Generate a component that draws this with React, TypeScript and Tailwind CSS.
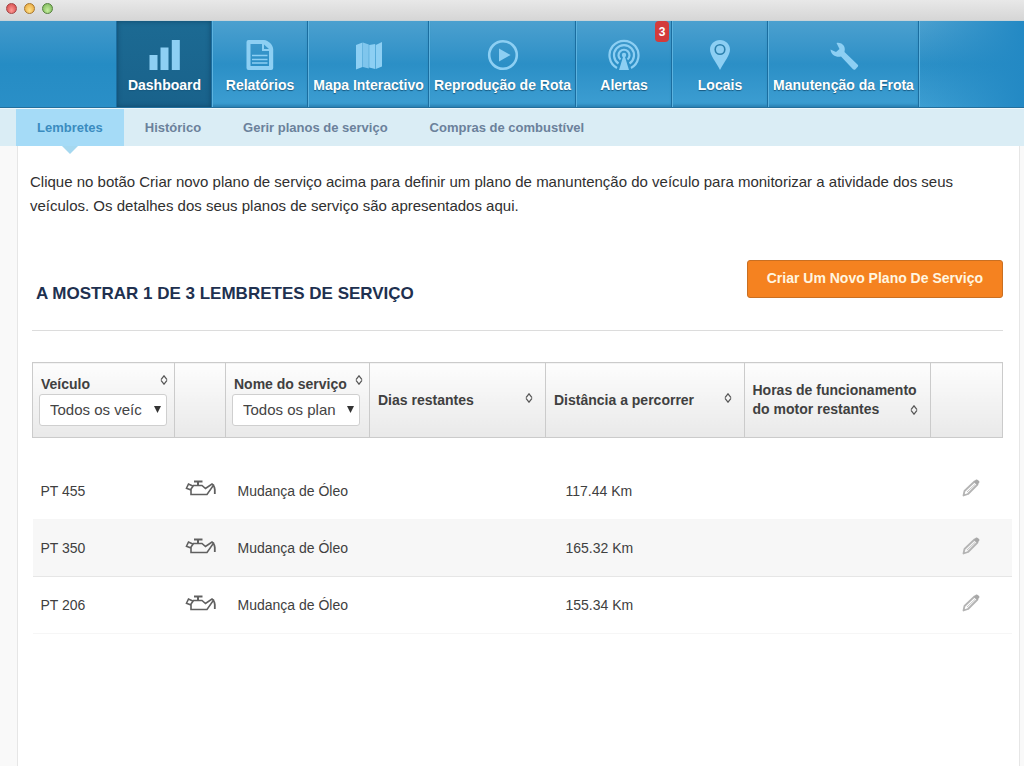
import React from "react";

type NavItem = { label: string; width: string; icon: React.ReactNode; badge?: number; active?: boolean };

const BarsIcon = () => (
  <svg width="32" height="32" viewBox="0 0 32 32" fill="currentColor" aria-hidden="true">
    <path d="M0.5 16H8.500V31H0.5zM11.500 8.500H19.500V31h-8zM22.800 1h8v30h-8z" />
  </svg>
);

const ReportIcon = () => (
  <svg width="32" height="32" viewBox="0 0 32 32" aria-hidden="true">
    <path
      fill="currentColor"
      fillRule="evenodd"
      d="M4.500 1H20c4.500.5 8.800 4.500 9.200 9V29a2 2 0 0 1-2 2H4.500a2 2 0 0 1-2-2V3a2 2 0 0 1 2-2zM6.500 5v22h18.500V12h-7V5zM20 5.500V10h5z"
    />
    <path stroke="currentColor" strokeWidth="1.500" d="M8 16.500h15.500M8 20.500h15.500M8 24h15.500" />
  </svg>
);

const MapIcon = () => (
  <svg width="32" height="32" viewBox="0 0 32 32" fill="currentColor" aria-hidden="true">
    <path d="M3 6l6.500-2.500V28L3 30.500zM16.200 6l6-1V30l-6-1.500zM22.800 6l6.200-3v24.500L22.800 30z" />
    <path d="M9.900 3.500L15.800 5.500V29.500L9.900 28z" opacity=".85" />
  </svg>
);

const PlayIcon = () => (
  <svg width="32" height="32" viewBox="0 0 32 32" aria-hidden="true">
    <circle cx="16" cy="16" r="13.800" fill="none" stroke="currentColor" strokeWidth="2.600" />
    <path fill="currentColor" d="M12 9.500l11.500 6.500L12 22.500z" />
  </svg>
);

const AlertIcon = () => (
  <svg width="32" height="32" viewBox="0 0 32 32" fill="none" stroke="currentColor" strokeWidth="2.200" aria-hidden="true">
    <path d="M9 29A14.500 14.500 0 1 1 23 29" />
    <path d="M10.500 24.500A10 10 0 1 1 21.500 24.500" />
    <path d="M12.500 20.500A5.500 5.500 0 1 1 19.500 20.500" />
    <circle cx="16" cy="16" r="2.200" fill="currentColor" stroke="none" />
    <path d="M15 18h2l4 13H11z" fill="currentColor" stroke="none" />
  </svg>
);

const PinIcon = () => (
  <svg width="32" height="32" viewBox="0 0 32 32" aria-hidden="true">
    <path fill="currentColor" d="M16 1c5.700 0 10 4.300 10 9.500C26 16.500 20 23 16 31 12 23 6 16.500 6 10.500 6 5.300 10.300 1 16 1z" />
    <circle cx="16" cy="10.500" r="4.800" fill="none" stroke="#2b80ad" strokeWidth="1.600" />
  </svg>
);

const WrenchIcon = () => (
  <svg width="32" height="32" viewBox="0 0 32 32" fill="currentColor" aria-hidden="true">
    <path d="M8.500 4c4-1 8.500 2 8.300 6.500l-.3 2.500L29.500 25.500c1 1 .8 1.800 0 2.500l-2 2.200c-.9.900-1.800.800-2.700-.1L13 17.500c-4.500 1.200-10-1.300-10.500-7l5.500 2.500 3.500-3z" />
  </svg>
);

const OilIcon = () => (
  <svg width="32" height="18" viewBox="0 0 32 18" fill="none" stroke="#606060" strokeWidth="1.600" aria-hidden="true">
    <path d="M9 2.500h8.500" strokeWidth="2" />
    <path d="M13 2.500v4" strokeWidth="2" />
    <path d="M6 15.500V10L8.500 6.500H17l3.500 3L27 5l1.500 1.200L22 15.500z" />
    <path d="M7.800 7L3.500 5 1.500 9.200 6 11" />
    <path d="M28 6c1.200 1.500 1.800 3 1.800 4.500V15" strokeWidth="1.800" />
  </svg>
);

const PencilIcon = () => (
  <svg width="18" height="18" viewBox="0 0 18 18" aria-hidden="true">
    <path fill="none" stroke="#b4b4b4" strokeWidth="1.800" strokeLinejoin="round" d="M1.500 16.500l1-4.500L12.500 2.500l3 3L6 15z" />
    <path d="M5 13l8-7.500" stroke="#c4c4c4" strokeWidth="1" />
    <path fill="#a8a8a8" d="M12 2.500L13.800 .8c.7-.6 1.400-.5 2 .1l1.200 1.200c.6.600.6 1.300 0 1.900L15.300 6z" />
  </svg>
);

const SortIcon = () => (
  <svg className="block" width="8" height="10" viewBox="0 0 8 10" fill="none" stroke="#555" strokeWidth="1.200" aria-hidden="true">
    <path d="M1 4.700L4 .8l3 3.900M1 5.300l3 3.900 3-3.900" />
  </svg>
);

const navItems: NavItem[] = [
  { label: "Dashboard", width: "w-[95px]", icon: <BarsIcon />, active: true },
  { label: "Relatórios", width: "w-[96px]", icon: <ReportIcon /> },
  { label: "Mapa Interactivo", width: "w-[121px]", icon: <MapIcon /> },
  { label: "Reprodução de Rota", width: "w-[147px]", icon: <PlayIcon /> },
  { label: "Alertas", width: "w-[96px]", icon: <AlertIcon />, badge: 3 },
  { label: "Locais", width: "w-[96px]", icon: <PinIcon /> },
  { label: "Manutenção da Frota", width: "w-[151px]", icon: <WrenchIcon /> },
];

const subItems = ["Lembretes", "Histórico", "Gerir planos de serviço", "Compras de combustível"];

const reminders = [
  { vehicle: "PT 455", service: "Mudança de Óleo", distance: "117.44 Km" },
  { vehicle: "PT 350", service: "Mudança de Óleo", distance: "165.32 Km" },
  { vehicle: "PT 206", service: "Mudança de Óleo", distance: "155.34 Km" },
];

const headCell = "border border-[#cbcbcb] bg-linear-to-b from-[#fdfdfd] to-[#e9e9e9] px-2 text-left font-bold";

function SortButton({ label }: { label: string }) {
  return (
    <button type="button" aria-label={`Ordenar por ${label}`} className="shrink-0 pb-1">
      <SortIcon />
    </button>
  );
}

function FilterHead({ id, label, option }: { id: string; label: string; option: string }) {
  return (
    <div className="-mx-0.5 pb-1">
      <div className="flex items-center justify-between pl-0.5">
        <label htmlFor={id} className="pt-1 leading-5 whitespace-nowrap">
          {label}
        </label>
        <SortButton label={label} />
      </div>
      <div className="relative w-32">
        <select
          id={id}
          className="block h-8 w-full appearance-none rounded-[3px] border border-[#cfcfcf] bg-white pl-2.5 text-[15px] font-normal text-[#444]"
        >
          <option>{option}</option>
        </select>
        <svg className="pointer-events-none absolute top-3 right-1.5" width="7" height="7" viewBox="0 0 7 7" aria-hidden="true">
          <path d="M0 0h7L3.500 7z" fill="#333" />
        </svg>
      </div>
    </div>
  );
}

export default function App() {
  return (
    <div className="flex min-h-screen flex-col bg-[#f9f9f9] font-['Liberation_Sans',Arial,sans-serif] text-sm text-[#404040]">
      <div className="flex h-[21px] items-start gap-[7px] border-b border-[#c9d3d8] bg-linear-to-b from-[#e8e8e8] to-[#d6d6d6] pt-[3px] pl-1.5">
        <span className="size-[11px] rounded-full border border-[#a34545] bg-radial-[at_50%_70%] from-[#ff9a95] to-[#cf4143]" />
        <span className="size-[11px] rounded-full border border-[#a8772c] bg-radial-[at_50%_70%] from-[#ffe28a] to-[#e5a035]" />
        <span className="size-[11px] rounded-full border border-[#54803c] bg-radial-[at_50%_70%] from-[#c5ee9d] to-[#74b052]" />
      </div>

      <nav className="flex h-[87px] border-b border-[#236f9c] bg-linear-to-b from-[#4ba0cf] via-[#2b8fc6] to-[#3d9ed2]">
        <div className="w-[117px] shrink-0 border-r border-[#1b6d9f] bg-linear-to-b from-[#4199cb] via-[#258cc4] to-[#2a8fc7]" />
        {navItems.map((item) => (
          <a
            key={item.label}
            href="#"
            className={`relative flex shrink-0 flex-col items-center border-r border-r-[#1b6d9f] pt-[18px] pl-px text-[#8dcff3] ${item.width} ${
              item.active
                ? "bg-linear-to-b from-[#1c6a93] to-[#19628b] shadow-[inset_0_0_5px_#0f4768]"
                : "shadow-[inset_1px_0_0_#5db3df,inset_0_-3px_3px_-1px_#2a80b2]"
            }`}
          >
            {item.icon}
            <span className="mt-1 leading-5 font-bold whitespace-nowrap text-white [text-shadow:0_1px_1px_#17587f]">{item.label}</span>
            {item.badge && (
              <span className="absolute top-0 right-0.5 flex h-[21px] w-[14px] items-center justify-center rounded-[4px] bg-[#d33b3b] text-xs font-bold text-white">
                {item.badge}
              </span>
            )}
          </a>
        ))}
        <div className="flex-1 bg-linear-to-r from-transparent to-[#2389c4] shadow-[inset_1px_0_0_#5db3df]" />
      </nav>

      <nav className="flex h-[38px] border-t border-[#eef7fb] bg-[#daedf5] pl-4 text-[13px] font-bold">
        {subItems.map((label, i) => (
          <a
            key={label}
            href="#"
            className={`relative flex items-center px-[21px] pt-0.5 ${i === 0 ? "bg-[#a5dbf7] text-[#3a8cc0]" : "text-[#6b819b]"}`}
          >
            {label}
            {i === 0 && (
              <svg className="absolute top-full left-1/2 -translate-x-1/2" width="16" height="8" viewBox="0 0 16 8" aria-hidden="true">
                <path d="M0 0h16L8 8z" fill="#a5d8f0" />
              </svg>
            )}
          </a>
        ))}
      </nav>

      <main className="mr-1 ml-[17px] flex-1 border-x border-[#e6e6e6] bg-white pt-6 pr-[7px] pl-3">
        <p className="mr-8 text-[15px] leading-6 text-[#303030]">
          Clique no botão Criar novo plano de serviço acima para definir um plano de manuntenção do veículo para monitorizar a atividade dos seus
          veículos. Os detalhes dos seus planos de serviço são apresentados aqui.
        </p>

        <div className="mt-[42px] mr-[9px] ml-0.5 flex items-start justify-between border-b border-[#dcdcdc] pb-6">
          <h1 className="mt-[22px] ml-1 text-[17px] leading-6 font-bold text-[#20304f]">A MOSTRAR 1 DE 3 LEMBRETES DE SERVIÇO</h1>
          <button
            type="button"
            className="-mb-2 h-[38px] rounded-[3px] border border-[#c96f22] bg-[#f58220] px-[19px] pb-0.5 text-sm font-bold whitespace-nowrap text-[#fff6e0]"
          >
            Criar Um Novo Plano De Serviço
          </button>
        </div>

        <table className="mt-[31px] ml-0.5 w-[calc(100%-2px)] table-fixed border-collapse">
          <colgroup>
            <col className="w-[142px]" />
            <col className="w-[51px]" />
            <col className="w-[144px]" />
            <col className="w-[176px]" />
            <col />
            <col className="w-[186px]" />
            <col className="w-[72px]" />
            <col className="w-[10px]" />
          </colgroup>
          <thead>
            <tr className="h-[75px]">
              <th className={headCell}>
                <FilterHead id="vehicle-filter" label="Veículo" option="Todos os veíc" />
              </th>
              <th className={headCell} />
              <th className={headCell}>
                <FilterHead id="service-filter" label="Nome do serviço" option="Todos os plan" />
              </th>
              <th className={headCell}>
                <div className="flex items-center justify-between pr-1">
                  Dias restantes
                  <SortButton label="Dias restantes" />
                </div>
              </th>
              <th className={headCell}>
                <div className="flex items-center justify-between pr-1">
                  Distância a percorrer
                  <SortButton label="Distância a percorrer" />
                </div>
              </th>
              <th className={headCell}>
                <div className="flex items-end justify-between pr-1 leading-[19px]">
                  <span className="-mr-4">
                    Horas de funcionamento
                    <br />
                    do motor restantes
                  </span>
                  <SortButton label="Horas de funcionamento do motor restantes" />
                </div>
              </th>
              <th className={headCell} />
            </tr>
          </thead>
          <tbody className="before:block before:h-6 before:content-['']">
            {reminders.map((r) => (
              <tr key={r.vehicle} className="h-[57px] border-b border-[#f6f6f6] even:border-[#e6e6e6] even:bg-[#f7f7f7]">
                <td className="pt-px pl-2">{r.vehicle}</td>
                <td className="pb-1 pl-2.5">
                  <OilIcon />
                </td>
                <td className="pt-px pl-3">{r.service}</td>
                <td />
                <td className="pt-px pl-5">{r.distance}</td>
                <td />
                <td colSpan={2} className="pb-1 pl-8">
                  <button type="button" aria-label={`Editar ${r.vehicle}`} className="block">
                    <PencilIcon />
                  </button>
                </td>
              </tr>
            ))}
          </tbody>
        </table>
      </main>
    </div>
  );
}
